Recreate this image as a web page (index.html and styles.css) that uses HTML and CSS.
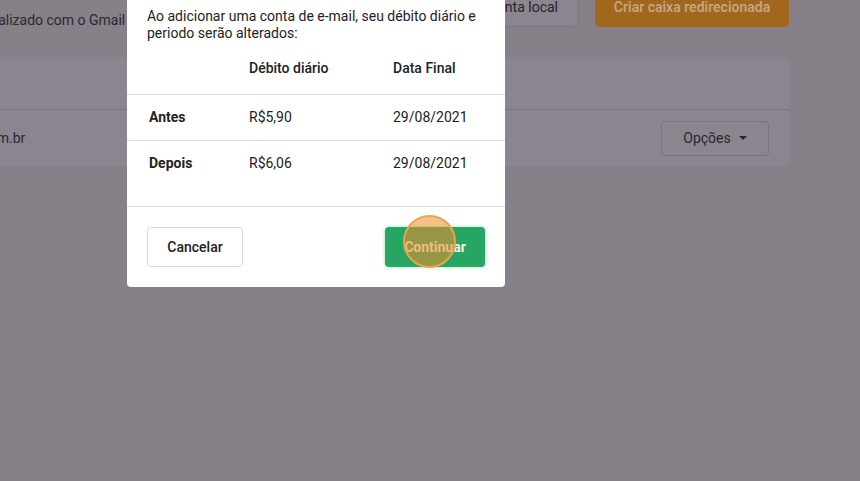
FILE: index.html
```html
<!DOCTYPE html>
<html lang="pt-BR">
<head>
<meta charset="utf-8">
<title>Adicionar conta</title>
<link rel="stylesheet" href="styles.css">
</head>
<body>
<div class="page">
  <div class="topbar">
    <p class="intro">Sincronize um e-mail personalizado com o Gmail ou crie uma conta local</p>
    <div class="actions">
      <button class="btn-ghost">Criar conta local</button>
      <button class="btn-orange">Criar caixa redirecionada</button>
    </div>
  </div>
  <section class="card">
    <div class="card-head"></div>
    <div class="card-row">
      <span class="email">contato@empresa.com.br</span>
      <button class="btn-options">Opções <span class="caret"></span></button>
    </div>
  </section>
</div>

<div class="modal">
  <div class="modal-body">
    <p class="msg">Ao adicionar uma conta de e-mail, seu débito diário e periodo serão alterados:</p>
    <table class="tbl">
      <thead>
        <tr><th></th><th>Débito diário</th><th>Data Final</th></tr>
      </thead>
      <tbody>
        <tr><td class="lbl">Antes</td><td>R$5,90</td><td>29/08/2021</td></tr>
        <tr><td class="lbl">Depois</td><td>R$6,06</td><td>29/08/2021</td></tr>
      </tbody>
    </table>
  </div>
  <div class="modal-foot">
    <button class="btn-cancel">Cancelar</button>
    <button class="btn-go">Continuar<span class="tap"></span></button>
  </div>
</div>
</body>
</html>
```

FILE: styles.css
```css
* { box-sizing: border-box; }
html, body { margin: 0; padding: 0; }
body {
  width: 860px;
  height: 481px;
  overflow: hidden;
  background: #868089;
  font-family: Roboto, "Noto Sans", sans-serif;
  font-size: 14px;
  color: #222;
}
button { font-family: inherit; font-size: 14px; cursor: pointer; }

.page {
  position: relative;
  margin-left: -178px;
  width: 967px;
}
.topbar {
  display: flex;
  align-items: flex-start;
  justify-content: space-between;
  height: 70px;
  margin-top: -13px;
}
.intro {
  margin: 0;
  padding-top: 24px;
  line-height: 18px;
  color: #2c2830;
  white-space: nowrap;
}
.actions { display: flex; gap: 16px; }
.btn-ghost {
  height: 40px;
  padding: 0 20px;
  background: #8b858f;
  border: 1px solid #7d7782;
  border-radius: 4px;
  color: #26222a;
}
.btn-orange {
  height: 40px;
  width: 194px;
  background: #a1671f;
  border: 0;
  border-radius: 4px;
  color: #c4a57e;
  font-weight: 600;
}
.card {
  background: #8b858f;
  border-radius: 4px;
}
.card-head {
  height: 53px;
  border-bottom: 1px solid #7b7583;
}
.card-row {
  height: 56px;
  display: flex;
  align-items: center;
  justify-content: space-between;
  padding: 0 20px 0 0;
}
.email { color: #2c2830; padding-left: 41px; }
.btn-options {
  width: 108px;
  height: 35px;
  background: #8b858f;
  border: 1px solid #79737e;
  border-radius: 4px;
  color: #2a262e;
  display: flex;
  align-items: center;
  justify-content: center;
  gap: 8px;
}
.caret {
  width: 0; height: 0;
  border-left: 4px solid transparent;
  border-right: 4px solid transparent;
  border-top: 4px solid #2a262e;
}

.modal {
  position: fixed;
  left: 127px;
  top: -19px;
  width: 378px;
  background: #fff;
  border-radius: 4px;
}
.modal-body { padding-top: 27px; padding-bottom: 20px; }
.msg {
  margin: 0;
  padding: 0 20px;
  line-height: 17px;
  color: #222;
}
.tbl {
  width: 100%;
  border-collapse: collapse;
}
.tbl th, .tbl td {
  height: 46px;
  text-align: left;
  padding: 0;
  vertical-align: middle;
  color: #222;
}
.tbl th { font-weight: 500; height: 52px; }
.tbl tr > :first-child { width: 122px; padding-left: 22px; }
.tbl tr > :nth-child(2) { width: 144px; }
.tbl thead tr { border-bottom: 1px solid #dedede; }
.tbl tbody tr:first-child { border-bottom: 1px solid #dedede; }
.tbl .lbl { font-weight: 700; }

.modal-foot {
  border-top: 1px solid #dedede;
  display: flex;
  justify-content: space-between;
  padding: 20px;
}
.btn-cancel {
  width: 96px;
  height: 40px;
  background: #fff;
  border: 1px solid #d5d9e0;
  border-radius: 4px;
  color: #222;
  font-weight: 500;
}
.btn-go {
  position: relative;
  width: 100px;
  height: 40px;
  background: #26a563;
  border: 0;
  border-radius: 4px;
  color: #eef6ee;
  font-weight: 700;
  box-shadow: 0 0 3px 1px #bff0cf;
}
.tap {
  position: absolute;
  left: 18px;
  top: -12px;
  width: 53px;
  height: 53px;
  border-radius: 50%;
  background: rgba(240, 140, 40, 0.55);
  border: 2px solid #f0a050;
}
```
